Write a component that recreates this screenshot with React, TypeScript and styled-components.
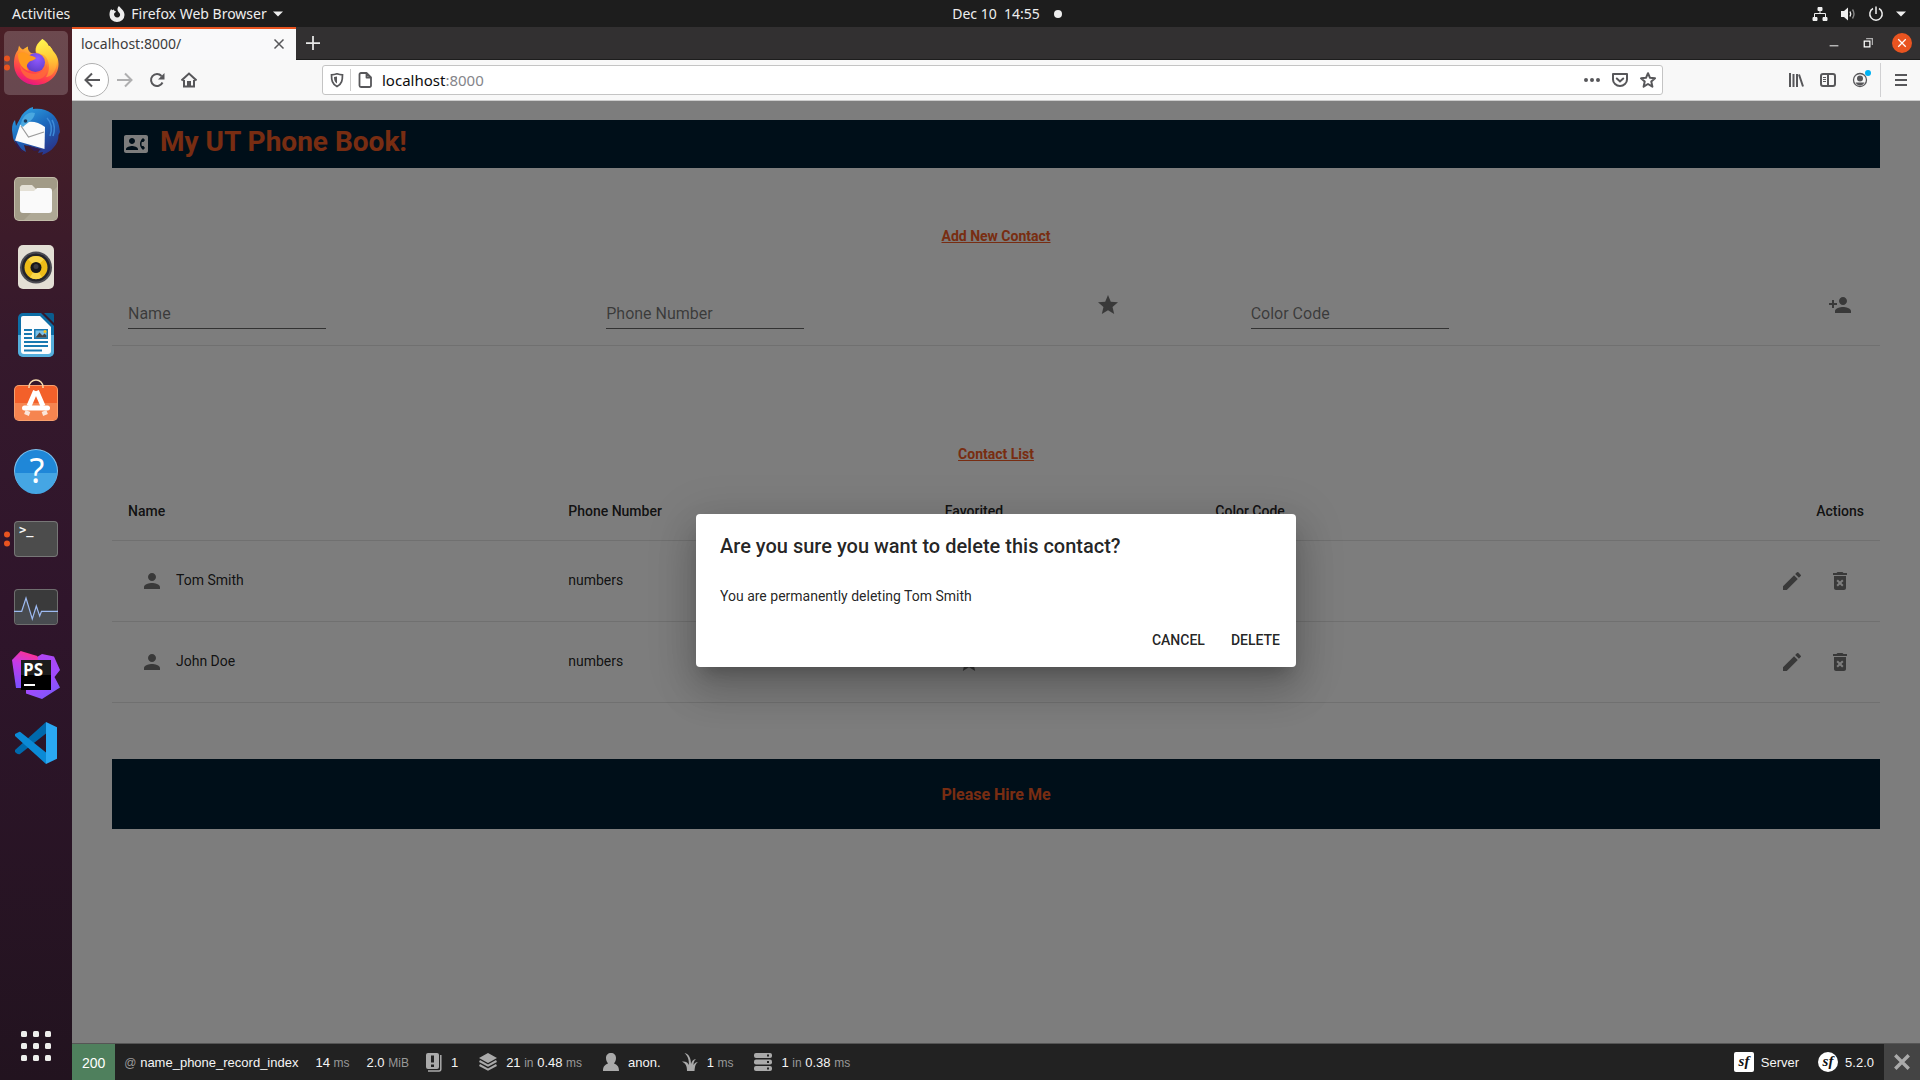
import React from "react";
import styled, { createGlobalStyle } from "styled-components";
import {
  MdContactPhone,
  MdDeleteForever,
  MdEdit,
  MdPerson,
  MdPersonAdd,
  MdStar,
} from "react-icons/md";

const GlobalStyle = createGlobalStyle`
  *, *::before, *::after { box-sizing: border-box; }
  body { margin: 0; }
  button, input { font: inherit; color: inherit; }
`;

const desktopFont = '"Noto Sans", "Open Sans", sans-serif';
const pageFont = 'Roboto, "Liberation Sans", sans-serif';
const debugFont = '"Liberation Sans", Arial, sans-serif';

/* ---------- Desktop shell ---------- */

const Desktop = styled.div`
  display: flex;
  flex-direction: column;
  min-height: 100vh;
  font-family: ${desktopFont};
  background: #2c1428;
`;

const SystemBar = styled.header`
  display: grid;
  grid-template-columns: 72px minmax(0, 1fr) auto minmax(0, 1fr);
  align-items: center;
  height: 27px;
  background: #1d1d1d;
  color: #eeeeee;
  font-size: 14px;
  line-height: 20px;
`;

const SystemLeft = styled.div`
  grid-column: 1 / 3;
  display: flex;
  align-items: center;
  gap: 39px;
  padding-left: 12px;
`;

const SystemRight = styled.div`
  display: flex;
  align-items: center;
  justify-content: space-between;
`;

const BareButton = styled.button`
  display: inline-flex;
  align-items: center;
  justify-content: center;
  gap: 6px;
  padding: 0;
  border: 0;
  background: none;
  cursor: pointer;
`;

const Clock = styled.time`
  white-space: pre;
`;

const NoticeDot = styled.span`
  width: 8px;
  height: 8px;
  margin-left: 14px;
  border-radius: 50%;
  background: #eeeeee;
`;

const Tray = styled.div`
  display: flex;
  align-items: center;
  gap: 12px;
  padding-right: 14px;
`;

const Workspace = styled.div`
  display: flex;
  flex: 1;
`;

const Dock = styled.nav`
  display: flex;
  flex: none;
  flex-direction: column;
  align-items: center;
  gap: 4px;
  width: 72px;
  padding: 4px 0 10px;
  background: linear-gradient(#4a1f26, #35192c 30%, #2f152b 55%, #22131f);
`;

const DockTile = styled.button<{ $active?: boolean }>`
  position: relative;
  display: grid;
  place-items: center;
  width: 64px;
  height: 64px;
  padding: 0;
  border: 0;
  border-radius: 5px;
  background: ${(p) => (p.$active ? "rgba(255, 255, 255, 0.19)" : "none")};
  cursor: pointer;

  &:last-child {
    margin-top: auto;
    height: 48px;
  }
`;

const RunningDots = styled.span`
  position: absolute;
  left: 0;
  top: 50%;
  display: grid;
  gap: 3px;
  transform: translateY(-50%);

  &::before,
  &::after {
    content: "";
    width: 6px;
    height: 6px;
    border-radius: 50%;
    background: #e95420;
  }
`;

/* ---------- Browser ---------- */

const Browser = styled.div`
  display: flex;
  flex: 1;
  flex-direction: column;
  min-width: 0;
`;

const TabStrip = styled.div`
  display: flex;
  align-items: stretch;
  height: 33px;
  background: #323031;
`;

const Tab = styled.div`
  display: flex;
  align-items: center;
  justify-content: space-between;
  width: 224px;
  padding: 0 11px 2px 9px;
  border-top: 2px solid #e95420;
  background: #f9f9fa;
  color: #3c3c3c;
  font-size: 14px;
  line-height: 20px;
`;

const NewTab = styled(BareButton)`
  width: 34px;
  border-bottom: 1px solid #1d1d1d;
`;

const WindowButtons = styled.div`
  display: flex;
  flex: 1;
  align-items: center;
  justify-content: flex-end;
  gap: 14px;
  padding-right: 8px;
  border-bottom: 1px solid #1d1d1d;
`;

const WindowButton = styled(BareButton)<{ $close?: boolean }>`
  width: 20px;
  height: 20px;
  border-radius: 50%;
  background: ${(p) => (p.$close ? "#e95420" : "none")};
`;

const NavBar = styled.div`
  display: flex;
  align-items: center;
  height: 41px;
  padding: 0 11px 0 3px;
  border-bottom: 1px solid #cccccc;
  background: #f8f8f8;
  color: #57575a;
`;

const NavButtons = styled.div`
  display: flex;
  align-items: center;
`;

const NavButton = styled(BareButton)<{ $ring?: boolean; $dim?: boolean }>`
  width: ${(p) => (p.$ring ? "34px" : "32px")};
  height: 34px;
  border: ${(p) => (p.$ring ? "1px solid #b0b0b0" : "0")};
  border-radius: 50%;
  background: ${(p) => (p.$ring ? "#ffffff" : "none")};
  opacity: ${(p) => (p.$dim ? 0.45 : 1)};
`;

const AddressBar = styled.div`
  display: flex;
  flex: 0 1 1341px;
  align-items: center;
  height: 30px;
  margin-left: 117px;
  padding: 0 6px;
  border: 1px solid #c4c4c4;
  border-radius: 3px;
  background: #ffffff;
`;

const AddressDivider = styled.span`
  width: 1px;
  height: 22px;
  margin: 0 6px 0 5px;
  background: #cccccc;
`;

const AddressText = styled.div`
  flex: 1;
  margin-left: 9px;
  color: #85858a;
  font-size: 15px;
  line-height: 20px;

  b {
    color: #0c0c0d;
    font-weight: 400;
  }
`;

const AddressActions = styled.div`
  display: flex;
  gap: 12px;
`;

const ToolbarEnd = styled.div`
  display: flex;
  align-items: center;
  gap: 16px;
  margin-left: auto;
`;

const ToolbarDivider = styled.span`
  width: 1px;
  height: 34px;
  margin: 0 -4px;
  background: #d0d0d2;
`;

/* ---------- Page ---------- */

const Viewport = styled.div`
  position: relative;
  display: flex;
  flex: 1;
  flex-direction: column;
  background: #fafafa;
  color: rgba(0, 0, 0, 0.87);
  font-family: ${pageFont};
  font-size: 14px;
  line-height: 20px;
`;

const Page = styled.main`
  flex: 1;
  padding: 19px 40px;
`;

const TitleBar = styled.header`
  display: flex;
  align-items: center;
  gap: 12px;
  padding-left: 12px;
  background: #001f33;
  color: #fafafa;
`;

const Title = styled.h1`
  margin: 0;
  padding-bottom: 4px;
  color: #f15a24;
  font-size: 28px;
  font-weight: 700;
  line-height: 44px;
`;

const SectionTitle = styled.h2<{ $gap: number }>`
  margin: ${(p) => p.$gap}px 0 20px;
  color: #f15a24;
  font-size: 14px;
  font-weight: 700;
  line-height: 20px;
  text-align: center;
  text-decoration: underline;
`;

const AddForm = styled.form`
  display: grid;
  grid-template-columns: 27.05% 27.05% 9.4% 1fr auto;
  margin-top: -1px;
  border-bottom: 1px solid #e0e0e0;
`;

const FormCell = styled.div`
  padding: 16px;
`;

const Field = styled.div`
  display: grid;
  width: 198px;
  height: 48px;
  padding-top: 18px;
  border-bottom: 1px solid rgba(0, 0, 0, 0.6);
  font-size: 16px;
  line-height: 20px;

  label,
  input {
    grid-area: 1 / 1;
    align-self: center;
  }

  label {
    color: rgba(0, 0, 0, 0.54);
  }

  input {
    width: 100%;
    padding: 0;
    border: 0;
    outline: 0;
    background: none;
  }
`;

const IconButton = styled.button`
  display: inline-flex;
  align-items: center;
  justify-content: center;
  width: 48px;
  height: 48px;
  padding: 0;
  border: 0;
  border-radius: 50%;
  background: none;
  color: rgba(0, 0, 0, 0.54);
  font-size: 24px;
  cursor: pointer;
`;

const ContactTable = styled.table`
  width: 100%;
  border-collapse: separate;
  border-spacing: 0;
  table-layout: fixed;

  th,
  td {
    padding: 0 16px;
    border-bottom: 1px solid #e0e0e0;
    text-align: left;
  }

  th {
    height: 57px;
    padding-bottom: 2px;
    font-weight: 500;
  }

  th:last-child,
  td:last-child {
    text-align: right;
  }

  td {
    height: 81px;
  }
`;

const Column = styled.col<{ $width?: string }>`
  width: ${(p) => p.$width ?? "auto"};
`;

const NameCell = styled.div`
  display: flex;
  align-items: center;
`;

const CellText = styled.span`
  display: block;
  padding-bottom: 2px;
`;

const PageFooter = styled.footer`
  margin-top: 56px;
  padding-top: 2px;
  background: #001f33;
  color: #f15a24;
  font-size: 16px;
  font-weight: 700;
  line-height: 68px;
  text-align: center;
`;

/* ---------- Dialog ---------- */

const Backdrop = styled.div`
  position: absolute;
  inset: 0;
  z-index: 1;
  display: flex;
  align-items: center;
  justify-content: center;
  background: rgba(0, 0, 0, 0.5);
`;

const Dialog = styled.section`
  width: 100%;
  max-width: 600px;
  border-radius: 4px;
  background: #ffffff;
  box-shadow:
    0 11px 15px -7px rgba(0, 0, 0, 0.2),
    0 24px 38px 3px rgba(0, 0, 0, 0.14),
    0 9px 46px 8px rgba(0, 0, 0, 0.12);
`;

const DialogTitle = styled.h2`
  margin: 0;
  padding: 16px 24px;
  font-size: 20px;
  font-weight: 500;
  line-height: 32px;
`;

const DialogText = styled.p`
  margin: 0;
  padding: 8px 24px;
`;

const DialogActions = styled.div`
  display: flex;
  justify-content: flex-end;
  gap: 10px;
  padding: 8px;
`;

const DialogButton = styled.button`
  min-width: 64px;
  padding: 6px 8px 7px;
  border: 0;
  border-radius: 4px;
  background: none;
  font-weight: 500;
  line-height: 24px;
  text-transform: uppercase;
  cursor: pointer;
`;

/* ---------- Debug toolbar ---------- */

const DebugBar = styled.footer`
  position: relative;
  z-index: 2;
  display: flex;
  align-items: stretch;
  height: 37px;
  border-top: 1px solid #555555;
  background: #222222;
  color: #f5f5f5;
  font-family: ${debugFont};
  font-size: 13px;
  line-height: 20px;
  white-space: nowrap;
`;

const DebugStatus = styled.a`
  padding: 9px 10px 0;
  background: #4f805d;
  color: #ffffff;
  font-size: 14px;
  text-decoration: none;
`;

const DebugItem = styled.a<{ $icon?: boolean; $tight?: boolean; $end?: boolean }>`
  display: flex;
  align-items: center;
  gap: ${(p) => (p.$tight ? "7px" : "9px")};
  margin-left: ${(p) => (p.$end ? "auto" : "0")};
  padding: 0 ${(p) => (p.$icon ? "12px" : p.$tight ? "10px" : "8px")} 0 9px;
  color: inherit;
  text-decoration: none;

  span {
    padding-top: 2px;
  }

  small {
    color: #999999;
    font-size: 12px;
  }

  svg {
    flex: none;
    color: #aaaaaa;
  }
`;

const DebugClose = styled(BareButton)`
  width: 36px;
  background: #444444;
`;

/* ---------- Dock drawings ---------- */

const DockSvg = ({ children }: { children: React.ReactNode }) => (
  <svg width="48" height="48" viewBox="0 0 48 48" aria-hidden="true">
    {children}
  </svg>
);

const FirefoxIcon = () => (
  <DockSvg>
    <defs>
      <linearGradient id="ff-body" x1="0.75" y1="0" x2="0.35" y2="1">
        <stop offset="0" stopColor="#fff44f" />
        <stop offset="0.3" stopColor="#ffc02e" />
        <stop offset="0.55" stopColor="#ff7139" />
        <stop offset="0.8" stopColor="#ff3750" />
        <stop offset="1" stopColor="#e31587" />
      </linearGradient>
      <radialGradient id="ff-globe" cx="0.6" cy="0.3" r="0.8">
        <stop offset="0" stopColor="#9059ff" />
        <stop offset="1" stopColor="#5b3bc4" />
      </radialGradient>
      <linearGradient id="ff-tail" x1="0.3" y1="0" x2="0.6" y2="1">
        <stop offset="0" stopColor="#fff44f" />
        <stop offset="1" stopColor="#ffb52e" stopOpacity="0.5" />
      </linearGradient>
    </defs>
    <path
      fill="url(#ff-body)"
      d="M30.300 0C33 2 36 4 36.500 7C37.500 6 40 10 41 12C45 16 46.500 20 46.500 25C46.500 37 36 46 24 46S2 37 2 25C2 18 3.500 14 6 11L7 6.500C8 8.500 9.500 10 11 10.500C13 9 14.500 8 16 7.500C15.500 10 16.500 12 19 14L24 14.500C22 7 27 3 30.300 0Z"
    />
    <path
      fill="url(#ff-tail)"
      d="M30.300 0C33 2 36 4 36.500 7C37.500 6 40 10 41 12C46 18 46 25 43 31C41 36 37 38 34 38C38 32 38 24 34 18C31 14 25 15 24 12C24 6 28 3 30.300 0Z"
    />
    <circle cx="23.500" cy="23.500" r="9.500" fill="url(#ff-globe)" />
    <path
      fill="#ff9b1d"
      d="M6 15C9 12 14 13 17 16C20 17.500 22 17 24 19C22 22 19 21 17 23C14 26 14 29 17 32C10 30 6 24 6 15Z"
    />
    <path
      fill="#ff6a3a"
      opacity="0.8"
      d="M8 25C11 34 21 37 29 33C33 31 34 28 34 25C37 31 34 38 28 40C18 43 8 37 8 25Z"
    />
  </DockSvg>
);

const ThunderbirdIcon = () => (
  <DockSvg>
    <defs>
      <linearGradient id="tb-wing" x1="0.2" y1="0" x2="0.8" y2="1">
        <stop offset="0" stopColor="#2fa2e3" />
        <stop offset="0.45" stopColor="#1c69bd" />
        <stop offset="1" stopColor="#2a2f86" />
      </linearGradient>
    </defs>
    <path
      fill="url(#tb-wing)"
      d="M10 8C13 4 17 1 21 0L21 2C34 0 45 7 47 19L48 25L46.500 28C46.500 33 45 37 42 40C39 44 35 46 30 48L31 45L26 46L28 42L12 38L14 45C8 42 3 37 1 31L0 23C0 18 1 15 3 13L4 19Z"
    />
    <path fill="#321b50" d="M3 33L12 46C7 43 3 38 3 33ZM15 38L30 43L22 44Z" />
    <path fill="#fbfbfb" d="M8 18C16 13 25 14 33 20L32.500 42L3 33.500Z" />
    <path fill="none" stroke="#9b9b9b" strokeWidth="1.200" d="M9 19L16.500 30L32 25" />
    <path fill="#4aa8e0" d="M10 13C13 7 18 4 23 6C22 13 16 15 11 20L8.500 18Z" />
    <circle cx="13.500" cy="14" r="1.800" fill="#1d3c5c" />
    <path
      stroke="#3e8bd8"
      strokeWidth="1.500"
      fill="none"
      d="M35 11C40 16 40 23 38 29M40 13C43 18 43 23 41 29"
    />
  </DockSvg>
);

const FilesIcon = () => (
  <DockSvg>
    <rect x="2" y="2" width="44" height="44" rx="5" fill="#c2bca9" />
    <rect x="3" y="3" width="42" height="42" rx="4" fill="#a29b87" />
    <path fill="#aea895" d="M45 12V41a4 4 0 0 1-4 4H12Z" />
    <path fill="#e4e0d5" d="M8 14a3 3 0 0 1 3-4h9l4 4h13v12H8Z" />
    <path fill="#fafafa" d="M8 16h14l3-3h12a3 3 0 0 1 3 3v19a3 3 0 0 1-3 3H11a3 3 0 0 1-3-3Z" />
  </DockSvg>
);

const MusicIcon = () => (
  <DockSvg>
    <rect x="6" y="2" width="36" height="44" rx="5" fill="#e3dfd5" />
    <circle cx="24" cy="24.500" r="16" fill="#4b4b52" />
    <circle cx="24" cy="24.500" r="14" fill="#24242a" />
    <circle cx="24" cy="24.500" r="11.500" fill="#eebc18" />
    <path fill="#f9d64a" d="M24 24.500L16 16.300A11.500 11.500 0 0 1 32 16.300ZM24 24.500L18 34.300A11.500 11.500 0 0 0 30 34.300Z" />
    <circle cx="24" cy="24.500" r="5.500" fill="#17171a" />
    <circle cx="24" cy="23.500" r="2.500" fill="#3b3b40" />
  </DockSvg>
);

const WriterIcon = () => (
  <DockSvg>
    <path fill="#0d6ea6" d="M11 2H29L42 15V41a5 5 0 0 1-5 5H11a5 5 0 0 1-5-5V7a5 5 0 0 1 5-5Z" />
    <path fill="#55aedb" d="M6 24H42V41a5 5 0 0 1-5 5H11a5 5 0 0 1-5-5Z" />
    <path fill="#0b5c8e" d="M32 2h8a2 2 0 0 1 2 2v8Z" />
    <path fill="#fdfdfd" d="M11 5H28L39 16V40a3 3 0 0 1-3 3H12a3 3 0 0 1-3-3V7a2 2 0 0 1 2-2Z" />
    <path
      stroke="#1878b0"
      strokeWidth="2"
      d="M12 19h8M12 23h8M12 27h8M12 31h24M12 35h24M12 39.500h18"
    />
    <rect x="22" y="18" width="14" height="10" fill="#1878b0" />
    <rect x="23.500" y="19.500" width="11" height="7" fill="#79c0e8" />
    <path fill="#454545" d="M23.500 26.500l4-5 3 3 2-2 2 2v2Z" />
    <circle cx="33" cy="20.500" r="1.500" fill="#f6c320" />
  </DockSvg>
);

const StoreIcon = () => (
  <DockSvg>
    <rect x="2" y="6" width="44" height="36" rx="5" fill="#f7a06e" />
    <rect x="3" y="7" width="42" height="34" rx="4" fill="#f3602a" />
    <path fill="#f68550" d="M3 24H45V37a4 4 0 0 1-4 4H7a4 4 0 0 1-4-4Z" />
    <path fill="none" stroke="#f7dcae" strokeWidth="1.500" d="M17 9V8A7 7 0 0 1 31 8V9" />
    <path fill="none" stroke="#ffffff" strokeWidth="5" d="M23.500 12L17 27M24.500 12L31 27" />
    <path stroke="#ffffff" strokeWidth="5" strokeLinecap="round" d="M12.500 29H35.500" />
    <path stroke="#fbe6da" strokeWidth="5" d="M16 32L14.500 36M32 32L33.500 36" />
  </DockSvg>
);

const HelpIcon = () => (
  <DockSvg>
    <circle cx="24" cy="24" r="22" fill="#7fc2ef" />
    <circle cx="24" cy="24" r="21" fill="#1f87d8" />
    <path fill="#45a6e4" d="M3 26H45A21 21 0 0 1 3 26Z" />
    <text x="25" y="36" fill="#ffffff" fontFamily="Noto Sans" fontSize="34" textAnchor="middle">
      ?
    </text>
  </DockSvg>
);

const TerminalIcon = () => (
  <DockSvg>
    <rect x="2" y="6" width="44" height="36" rx="4" fill="#777777" />
    <rect x="3" y="7" width="42" height="34" rx="3" fill="#4c4c4c" />
    <text x="7" y="19" fill="#f5f5f5" fontFamily="DejaVu Sans Mono" fontSize="12" fontWeight="700">
      {">_"}
    </text>
  </DockSvg>
);

const MonitorIcon = () => (
  <DockSvg>
    <rect x="2" y="6" width="44" height="36" rx="4" fill="#6e6e6e" />
    <rect x="3" y="7" width="42" height="34" rx="3" fill="#3a3a3b" />
    <path
      fill="#484b50"
      d="M3 28H10L14 15L20.300 36L24.300 23L27.700 33L29 28H45V38a3 3 0 0 1-3 3H6a3 3 0 0 1-3-3Z"
    />
    <path
      fill="none"
      stroke="#9dbaf2"
      strokeWidth="1.200"
      d="M2 28.300H9.700L14 15L20.300 36L24.300 23L27.700 33L29.500 28.300H46"
    />
  </DockSvg>
);

const PhpStormIcon = () => (
  <DockSvg>
    <defs>
      <linearGradient id="ps-left" x1="0.6" y1="0" x2="0.3" y2="1">
        <stop offset="0" stopColor="#ff318c" />
        <stop offset="0.4" stopColor="#c63ae8" />
        <stop offset="1" stopColor="#7b50ff" />
      </linearGradient>
      <linearGradient id="ps-right" x1="0.3" y1="0" x2="0.8" y2="1">
        <stop offset="0" stopColor="#b345f1" />
        <stop offset="0.6" stopColor="#a04bff" />
        <stop offset="1" stopColor="#765af8" />
      </linearGradient>
    </defs>
    <path fill="url(#ps-right)" d="M25 6L30 3L42 5.500L48 19L42.500 26L48 36.500L30 48L14 42.500V20Z" />
    <path fill="url(#ps-left)" d="M0 9L8.700 0L25.300 5L28 20L14 37H4Z" />
    <rect x="9" y="9" width="30" height="30" fill="#000000" />
    <path fill="#1c1c1c" d="M9 9H39V24H9Z" />
    <text x="11" y="25" fill="#ffffff" fontFamily="Open Sans" fontSize="17" fontWeight="700">
      PS
    </text>
    <rect x="12" y="33" width="11" height="2" fill="#ffffff" />
  </DockSvg>
);

const CodeIcon = () => (
  <DockSvg>
    <path fill="#0069ac" d="M3 31L34 3V14.500L8 35Q6 36 3 33Z" />
    <path fill="#0b8ad6" d="M3 17V15L7 13Q8 12.500 9 13.500L34 33.500V45Z" />
    <path fill="#2aa8f2" d="M34 3L45 8.300V39.700L34 45Z" />
  </DockSvg>
);

const GridIcon = () => (
  <svg width="30" height="30" viewBox="0 0 30 30" fill="#eeeeec" aria-hidden="true">
    {[0, 12, 24].map((y) =>
      [0, 12, 24].map((x) => (
        <rect key={`${x}-${y}`} x={x} y={y} width="6" height="6" rx="1.500" />
      )),
    )}
  </svg>
);

/* ---------- Small line drawings ---------- */

type GlyphProps = { size?: number; width?: number; color?: string; children: React.ReactNode };

const Glyph = ({ size = 16, width = 2, color = "currentColor", children }: GlyphProps) => (
  <svg
    width={size}
    height={size}
    viewBox="0 0 16 16"
    fill="none"
    stroke={color}
    strokeWidth={width}
    aria-hidden="true"
  >
    {children}
  </svg>
);

const Triangle = () => (
  <svg width="10" height="6" viewBox="0 0 10 6" fill="#eeeeee" aria-hidden="true">
    <path d="M0 0.500H10L5 5.500Z" />
  </svg>
);

const Cross = ({ size, color, width }: { size: number; color: string; width: number }) => (
  <Glyph size={size} color={color} width={width}>
    <path d="M2 2L14 14M14 2L2 14" />
  </Glyph>
);

const dockApps = [
  { name: "Firefox", icon: <FirefoxIcon />, active: true, running: true },
  { name: "Thunderbird", icon: <ThunderbirdIcon /> },
  { name: "Files", icon: <FilesIcon /> },
  { name: "Rhythmbox", icon: <MusicIcon /> },
  { name: "Writer", icon: <WriterIcon /> },
  { name: "Software", icon: <StoreIcon /> },
  { name: "Help", icon: <HelpIcon /> },
  { name: "Terminal", icon: <TerminalIcon />, running: true },
  { name: "System Monitor", icon: <MonitorIcon /> },
  { name: "PhpStorm", icon: <PhpStormIcon /> },
  { name: "Code", icon: <CodeIcon /> },
];

const contacts = [
  { name: "Tom Smith", phone: "numbers" },
  { name: "John Doe", phone: "numbers" },
];

const TopBar = () => (
  <SystemBar>
    <SystemLeft>
      <BareButton>Activities</BareButton>
      <BareButton>
        <svg width="16" height="16" viewBox="0 0 16 16" fill="#eeeeee" aria-hidden="true">
          <path
            fillRule="evenodd"
            d="M10 0C11 2 15.500 4 15.500 9A7.500 7 0 0 1 0.500 9C0.500 6 1 4.500 2.200 3L3 4.200L5 3.500C5 4.500 5.500 5 7 5.500C7 6.500 5.500 6.500 5 8C5 10 6.500 11.500 8.200 11.500C10.500 11.500 11.500 9.500 11 8C10.500 6.500 9 6 8.500 4C8.300 2 9 1 10 0Z"
          />
        </svg>
        Firefox Web Browser
        <Triangle />
      </BareButton>
    </SystemLeft>
    <Clock>{"Dec 10  14:55"}</Clock>
    <SystemRight>
      <NoticeDot />
      <Tray>
        <Glyph color="#eeeeee" width={1}>
          <path d="M8 5V8M2.500 11V7.500H13.500V11" />
          <path fill="#eeeeee" d="M6 1.500h4v3H6ZM1 11.500h4v3H1ZM11 11.500h4v3H11Z" />
        </Glyph>
        <Glyph color="#eeeeee" width={1.4}>
          <path fill="#eeeeee" stroke="none" d="M1 5H4L8 1.500V14.500L4 11H1Z" />
          <path d="M10 5.500Q11.500 8 10 10.500" />
          <path opacity="0.5" d="M12.500 3.500Q15.500 8 12.500 12.500" />
        </Glyph>
        <Glyph color="#eeeeee" width={1.5}>
          <path d="M5 2.500A6.200 6.200 0 1 0 11 2.500M8 0.500V8" />
        </Glyph>
        <Triangle />
      </Tray>
    </SystemRight>
  </SystemBar>
);

const NavigationBar = () => (
  <NavBar>
    <NavButtons>
      <NavButton $ring aria-label="Back">
        <Glyph><path d="M16 8H2M8 1.500L1.500 8L8 14.500" /></Glyph>
      </NavButton>
      <NavButton $dim aria-label="Forward">
        <Glyph><path d="M0 8H14M8 1.500L14.500 8L8 14.500" /></Glyph>
      </NavButton>
      <NavButton aria-label="Reload">
        <Glyph>
          <path d="M13.500 10.500A6 6 0 1 1 12.500 4" />
          <path fill="currentColor" stroke="none" d="M15.500 1V7.500H9Z" />
        </Glyph>
      </NavButton>
      <NavButton aria-label="Home">
        <Glyph>
          <path d="M0.500 8.500L8 1.500L15.500 8.500M3 8V14.500H13V8" />
          <path fill="currentColor" stroke="none" d="M6 9h4v6H6Z" />
        </Glyph>
      </NavButton>
    </NavButtons>
    <AddressBar>
      <Glyph>
        <path strokeWidth="1.700" d="M8 1.800C10 2.500 12 2.800 13.500 2.800C13.500 8 13 12 8 14.500C3 12 2.500 8 2.500 2.800C4 2.800 6 2.500 8 1.800Z" />
        <path fill="currentColor" stroke="none" d="M8 4.500V11.500C5.500 10 5 8 5 5Z" />
      </Glyph>
      <AddressDivider />
      <Glyph>
        <path strokeWidth="1.800" strokeLinejoin="round" d="M9.500 1H4A1.500 1.500 0 0 0 2.500 2.500V13.500A1.500 1.500 0 0 0 4 15H12.500A1.500 1.500 0 0 0 14 13.500V5.500ZM9.500 1V5.500H14" />
      </Glyph>
      <AddressText role="textbox" aria-label="Address" tabIndex={0}>
        <b>localhost</b>:8000
      </AddressText>
      <AddressActions>
        <BareButton aria-label="Page actions">
          <Glyph><path fill="currentColor" stroke="none" d="M0 8a2 2 0 1 0 4 0a2 2 0 1 0-4 0M6 8a2 2 0 1 0 4 0a2 2 0 1 0-4 0M12 8a2 2 0 1 0 4 0a2 2 0 1 0-4 0" /></Glyph>
        </BareButton>
        <BareButton aria-label="Save to Pocket">
          <Glyph>
            <path strokeLinejoin="round" d="M1 2H15V7.500A7 6.500 0 0 1 1 7.500Z" />
            <path strokeLinecap="round" d="M4.800 6.500L8 9.500L11.200 6.500" />
          </Glyph>
        </BareButton>
        <BareButton aria-label="Bookmark">
          <Glyph><path strokeLinejoin="round" d="M8 1.200L10 5.800L15 6.300L11.300 9.600L12.400 14.700L8 12L3.600 14.700L4.700 9.600L1 6.300L6 5.800Z" /></Glyph>
        </BareButton>
      </AddressActions>
    </AddressBar>
    <ToolbarEnd>
      <BareButton aria-label="Library">
        <Glyph><path d="M2 1V15M5.500 2V15M9 2V15M11 2.500L15 14.500" /></Glyph>
      </BareButton>
      <BareButton aria-label="Sidebar">
        <Glyph>
          <rect x="1" y="2" width="14" height="12" rx="2" />
          <path d="M8 2V14" />
          <path strokeWidth="1" d="M3 5.500H6M3 7.500H6M3 9.500H6" />
        </Glyph>
      </BareButton>
      <BareButton aria-label="Account">
        <svg width="16" height="16" viewBox="0 0 16 16" overflow="visible" aria-hidden="true">
          <circle cx="8" cy="8" r="6.500" fill="none" stroke="currentColor" strokeWidth="1.300" />
          <circle cx="8" cy="6.500" r="3" fill="currentColor" />
          <path fill="currentColor" d="M3.500 10.500H12.500Q11 13.500 8 13.500T3.500 10.500Z" />
          <circle cx="16" cy="1" r="3" fill="#00b3f4" />
        </svg>
      </BareButton>
      <ToolbarDivider />
      <BareButton aria-label="Menu">
        <Glyph><path d="M2 3H14M2 8H14M2 13H14" /></Glyph>
      </BareButton>
    </ToolbarEnd>
  </NavBar>
);

const ContactsPage = () => (
  <Page>
    <TitleBar>
      <MdContactPhone size={24} />
      <Title>My UT Phone Book!</Title>
    </TitleBar>

    <SectionTitle $gap={58}>Add New Contact</SectionTitle>
    <AddForm>
      <FormCell>
        <Field>
          <label htmlFor="name">Name</label>
          <input id="name" />
        </Field>
      </FormCell>
      <FormCell>
        <Field>
          <label htmlFor="phone">Phone Number</label>
          <input id="phone" />
        </Field>
      </FormCell>
      <FormCell>
        <IconButton type="button" aria-label="Favorite"><MdStar /></IconButton>
      </FormCell>
      <FormCell>
        <Field>
          <label htmlFor="color">Color Code</label>
          <input id="color" />
        </Field>
      </FormCell>
      <FormCell>
        <IconButton type="button" aria-label="Add contact"><MdPersonAdd /></IconButton>
      </FormCell>
    </AddForm>

    <SectionTitle $gap={98}>Contact List</SectionTitle>
    <ContactTable>
      <colgroup>
        <Column $width="24.9%" />
        <Column $width="21.3%" />
        <Column $width="15.3%" />
        <Column $width="19%" />
        <Column />
      </colgroup>
      <thead>
        <tr>
          <th scope="col">Name</th>
          <th scope="col">Phone Number</th>
          <th scope="col">Favorited</th>
          <th scope="col">Color Code</th>
          <th scope="col">Actions</th>
        </tr>
      </thead>
      <tbody>
        {contacts.map((c) => (
          <tr key={c.name}>
            <td>
              <NameCell>
                <IconButton aria-label={`Open ${c.name}`}><MdPerson /></IconButton>
                <CellText>{c.name}</CellText>
              </NameCell>
            </td>
            <td><CellText>{c.phone}</CellText></td>
            <td>
              <NameCell>
                <IconButton aria-label={`Favorite ${c.name}`}><MdStar /></IconButton>
              </NameCell>
            </td>
            <td />
            <td>
              <IconButton aria-label={`Edit ${c.name}`}><MdEdit /></IconButton>
              <IconButton aria-label={`Delete ${c.name}`}><MdDeleteForever /></IconButton>
            </td>
          </tr>
        ))}
      </tbody>
    </ContactTable>

    <PageFooter>Please Hire Me</PageFooter>
  </Page>
);

const DeleteDialog = () => (
  <Backdrop>
    <Dialog role="dialog" aria-modal="true" aria-labelledby="delete-title">
      <DialogTitle id="delete-title">Are you sure you want to delete this contact?</DialogTitle>
      <DialogText>You are permanently deleting Tom Smith</DialogText>
      <DialogActions>
        <DialogButton>Cancel</DialogButton>
        <DialogButton>Delete</DialogButton>
      </DialogActions>
    </Dialog>
  </Backdrop>
);

const SymfonyMark = ({ round }: { round?: boolean }) => (
  <svg width="20" height="20" viewBox="0 0 20 20" aria-hidden="true">
    <rect width="20" height="20" rx={round ? 10 : 2} fill="#ffffff" />
    <text
      x="10"
      y="14"
      fill="#111111"
      fontFamily="Liberation Serif"
      fontSize="15"
      fontStyle="italic"
      fontWeight="700"
      textAnchor="middle"
    >
      sf
    </text>
  </svg>
);

const DebugToolbar = () => (
  <DebugBar>
    <DebugStatus href="#status">200</DebugStatus>
    <DebugItem href="#route">
      <span><small>@</small> name_phone_record_index</span>
    </DebugItem>
    <DebugItem href="#time">
      <span>14 <small>ms</small></span>
    </DebugItem>
    <DebugItem href="#memory">
      <span>2.0 <small>MiB</small></span>
    </DebugItem>
    <DebugItem $icon href="#logs">
      <svg width="16" height="20" viewBox="0 0 16 20" aria-hidden="true">
        <rect x="0" y="1" width="13" height="16" rx="2" fill="currentColor" />
        <path fill="none" stroke="currentColor" strokeWidth="1.500" d="M14.800 3V17Q14.800 19 13 19H2" />
        <path fill="#222222" d="M5 3.500H8V10.500H5ZM5 12.500H8V15H5Z" />
      </svg>
      <span>1</span>
    </DebugItem>
    <DebugItem $icon href="#cache">
      <svg width="18" height="20" viewBox="0 0 18 20" aria-hidden="true">
        <path fill="currentColor" d="M9 1L18 6L9 11L0 6Z" />
        <path fill="none" stroke="currentColor" strokeWidth="2" d="M0.500 9L9 13.700L17.500 9M0.500 13L9 17.700L17.500 13" />
      </svg>
      <span>21 <small>in</small> 0.48 <small>ms</small></span>
    </DebugItem>
    <DebugItem $icon href="#user">
      <svg width="16" height="20" viewBox="0 0 16 20" fill="currentColor" aria-hidden="true">
        <path d="M8 1C11 1 13 3 13 6C13 8.500 12 10 11 11.500C14 13 16 14 16 19H0C0 14 2 13 5 11.500C4 10 3 8.500 3 6C3 3 5 1 8 1Z" />
      </svg>
      <span>anon.</span>
    </DebugItem>
    <DebugItem $icon href="#twig">
      <svg width="16" height="20" viewBox="0 0 16 20" fill="currentColor" aria-hidden="true">
        <path d="M5 19C5 14 4 12 0 9.500C4 9 6 11 7 13C7 8 6 4 2.500 1C7 2 9 6 9 12C10 9 11 7.500 14 7C12 9 11.500 10 11.500 13C12.500 11 14 10 16 10C13 12 13 15 12.500 19Z" />
      </svg>
      <span>1 <small>ms</small></span>
    </DebugItem>
    <DebugItem $icon href="#db">
      <svg width="18" height="20" viewBox="0 0 18 20" aria-hidden="true">
        <g fill="currentColor">
          <rect x="0" y="1" width="18" height="5" rx="2" />
          <rect x="0" y="7.500" width="18" height="5" rx="2" />
          <rect x="0" y="14" width="18" height="5" rx="2" />
        </g>
        <path fill="#222222" d="M13 2.500h2v2h-2ZM13 9h2v2h-2ZM13 15.500h2v2h-2Z" />
      </svg>
      <span>1 <small>in</small> 0.38 <small>ms</small></span>
    </DebugItem>
    <DebugItem $end $tight href="#server">
      <SymfonyMark />
      <span>Server</span>
    </DebugItem>
    <DebugItem $tight href="#version">
      <SymfonyMark round />
      <span>5.2.0</span>
    </DebugItem>
    <DebugClose aria-label="Close toolbar">
      <Cross size={18} color="#aaaaaa" width={3} />
    </DebugClose>
  </DebugBar>
);

export default function App() {
  return (
    <Desktop>
      <GlobalStyle />
      <TopBar />
      <Workspace>
        <Dock>
          {dockApps.map((app) => (
            <DockTile key={app.name} $active={app.active} aria-label={app.name}>
              {app.running && <RunningDots />}
              {app.icon}
            </DockTile>
          ))}
          <DockTile aria-label="Show applications"><GridIcon /></DockTile>
        </Dock>
        <Browser>
          <TabStrip>
            <Tab>
              localhost:8000/
              <BareButton aria-label="Close tab"><Cross size={12} color="#57575a" width={2} /></BareButton>
            </Tab>
            <NewTab aria-label="New tab">
              <Glyph size={14} color="#e8e8e8" width={2}><path d="M8 0V16M0 8H16" /></Glyph>
            </NewTab>
            <WindowButtons>
              <WindowButton aria-label="Minimize">
                <Glyph size={10} color="#ffffff" width={1.5}><path d="M1 12.500H15" /></Glyph>
              </WindowButton>
              <WindowButton aria-label="Restore">
                <Glyph size={10} color="#ffffff" width={2}>
                  <path d="M2 5H11V14H2Z" />
                  <path opacity="0.6" d="M5 1H15V11" />
                </Glyph>
              </WindowButton>
              <WindowButton $close aria-label="Close window">
                <Cross size={10} color="#ffffff" width={2} />
              </WindowButton>
            </WindowButtons>
          </TabStrip>
          <NavigationBar />
          <Viewport>
            <ContactsPage />
            <DeleteDialog />
            <DebugToolbar />
          </Viewport>
        </Browser>
      </Workspace>
    </Desktop>
  );
}
